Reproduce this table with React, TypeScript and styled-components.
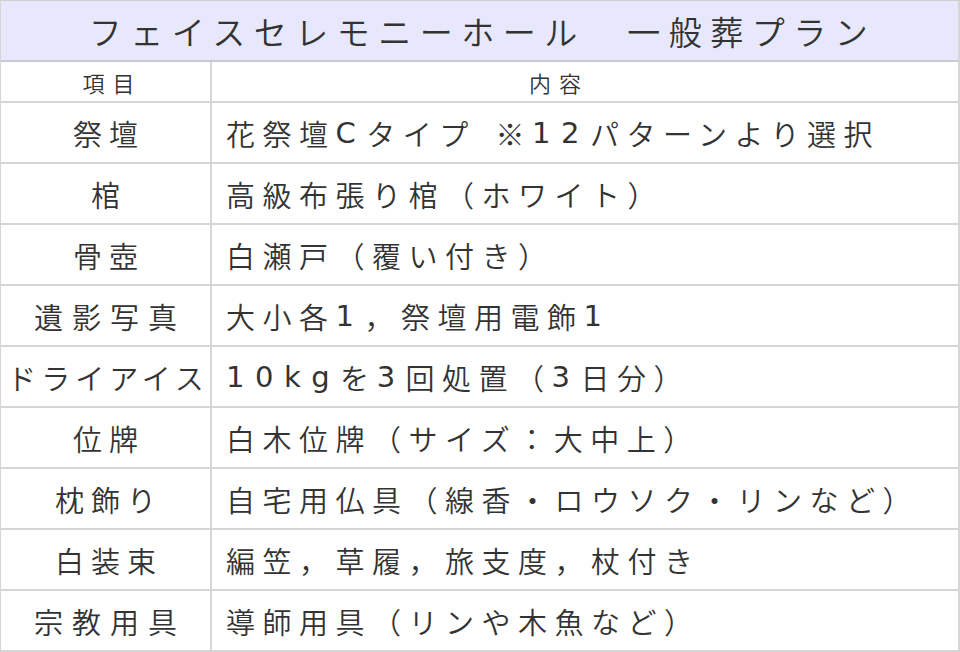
import * as React from 'react'
import styled, { createGlobalStyle } from 'styled-components'

const GlobalStyle = createGlobalStyle`
  html, body {
    margin: 0;
    padding: 0;
    background: #fff;
  }
  body {
    font-family: "Noto Sans CJK JP", "DejaVu Sans", sans-serif;
    font-weight: 350;
    color: #333;
  }
`

const rows: [string, string][] = [
  ['祭壇', '花祭壇Cタイプ ※12パターンより選択'],
  ['棺', '高級布張り棺（ホワイト）'],
  ['骨壺', '白瀬戸（覆い付き）'],
  ['遺影写真', '大小各1，祭壇用電飾1'],
  ['ドライアイス', '10kgを3回処置（3日分）'],
  ['位牌', '白木位牌（サイズ：大中上）'],
  ['枕飾り', '自宅用仏具（線香・ロウソク・リンなど）'],
  ['白装束', '編笠，草履，旅支度，杖付き'],
  ['宗教用具', '導師用具（リンや木魚など）'],
]

// Latin letters, digits and spaces sit in their own run, wider than the Japanese text
const latinRun = /([A-Za-z0-9 ]+)/

function renderDetail(text: string) {
  return text.split(latinRun).map((part, i) =>
    /^[A-Za-z0-9 ]+$/.test(part) ? <Latin key={i}>{part}</Latin> : <React.Fragment key={i}>{part}</React.Fragment>
  )
}

export default function App() {
  return (
    <>
      <GlobalStyle />
      <Plan>
        <Title>フェイスセレモニーホール　一般葬プラン</Title>
        <HeadCell>項目</HeadCell>
        <HeadCell $shift>内容</HeadCell>
        {rows.map(([item, detail]) => (
          <React.Fragment key={item}>
            <ItemCell $spacing={item.length > 5 ? 5 : item.length > 3 ? 9 : 7}>{item}</ItemCell>
            <DetailCell>{renderDetail(detail)}</DetailCell>
          </React.Fragment>
        ))}
      </Plan>
    </>
  )
}

const Plan = styled.div`
  display: grid;
  grid-template-columns: 211px 1fr;
  grid-template-rows: 61px 41px repeat(9, 61px);
  width: 960px;
  box-sizing: border-box;
  border-top: 1px solid #cfcfcf;
  border-left: 1px solid #d6d6d6;
`

const Cell = styled.div`
  display: flex;
  align-items: center;
  box-sizing: border-box;
  border-right: 2px solid #d6d6d6;
  border-bottom: 2px solid #d6d6d6;
  white-space: pre;
  overflow: hidden;
`

const Title = styled(Cell)`
  grid-column: 1 / -1;
  justify-content: center;
  background: #e8e8fc;
  border-bottom-color: #cacad2;
  font-size: 33px;
  letter-spacing: 8.5px;
  padding-left: 6px;
`

const HeadCell = styled(Cell)<{ $shift?: boolean }>`
  justify-content: center;
  font-size: 22px;
  letter-spacing: 8px;
  padding-left: 14px;
  padding-right: ${(p) => (p.$shift ? '66px' : '0')};
`

const ItemCell = styled(Cell)<{ $spacing: number }>`
  justify-content: center;
  font-size: 29px;
  letter-spacing: ${(p) => p.$spacing}px;
  padding-left: ${(p) => p.$spacing}px;
`

const DetailCell = styled(Cell)`
  padding-left: 14px;
  font-size: 29px;
  letter-spacing: 7.5px;
`

const Latin = styled.span`
  font-family: "DejaVu Sans", sans-serif;
  font-weight: 400;
  letter-spacing: 10.5px;
`
